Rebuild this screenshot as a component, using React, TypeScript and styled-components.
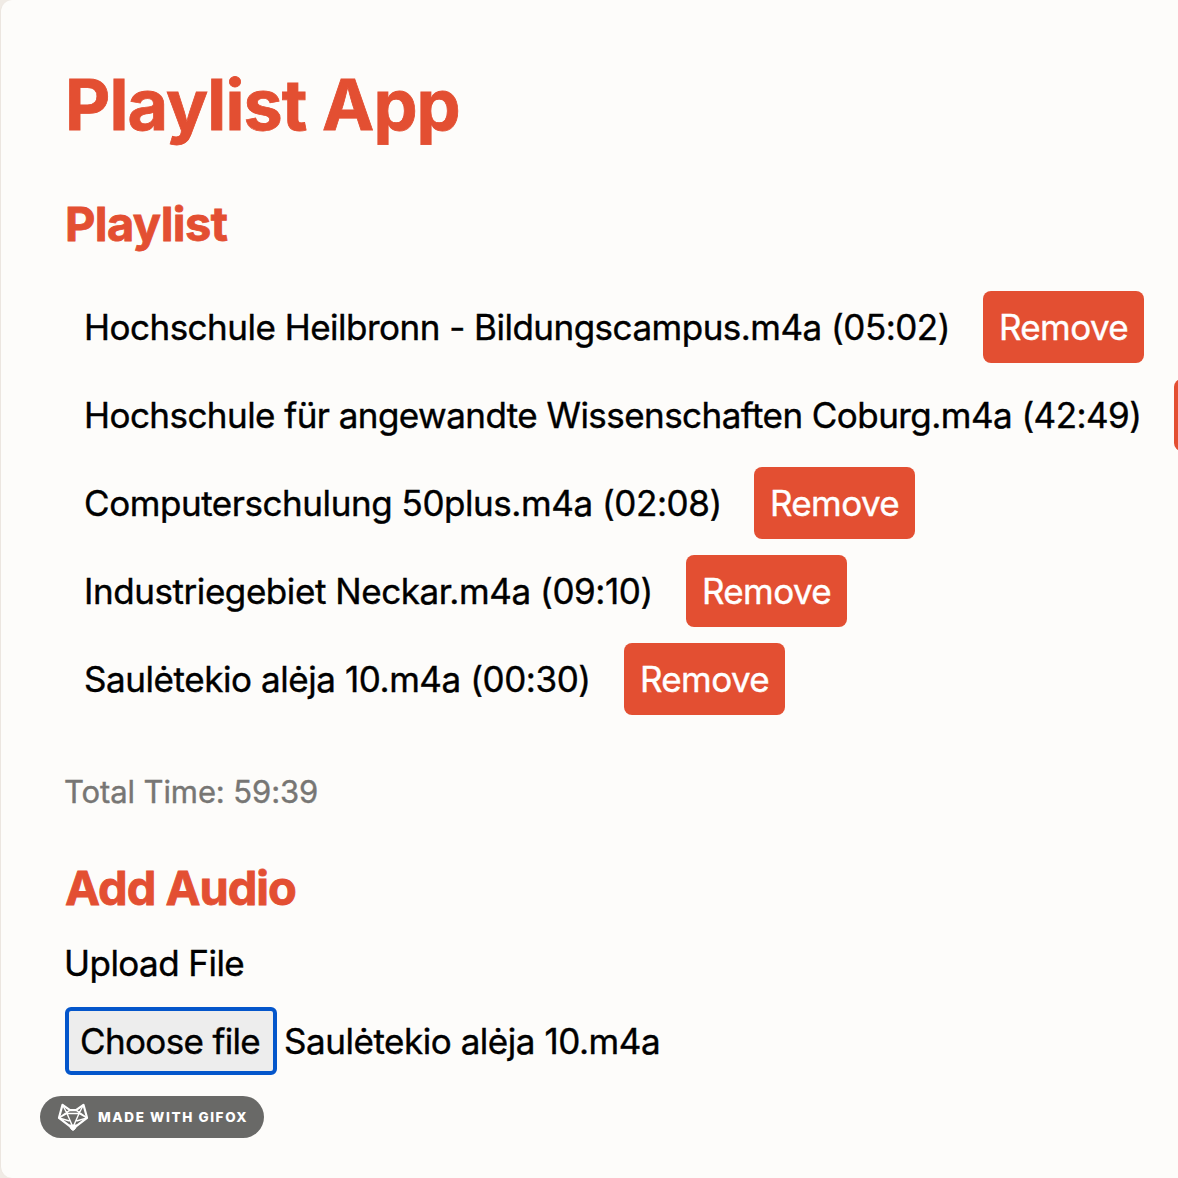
import React from "react";
import styled, { createGlobalStyle } from "styled-components";

const GlobalStyle = createGlobalStyle`
  *, *::before, *::after { box-sizing: border-box; }
  html, body { margin: 0; padding: 0; overflow: hidden; background: #f0ebe5; }
  body { font-family: Inter, "Liberation Sans", sans-serif; }
  button { font: inherit; }
`;

const Window = styled.main`
  width: 1178px;
  height: 1178px;
  padding: 60px 0 0 64px;
  overflow: hidden;
  background: #fdfcfa;
  border-left: 1px solid #ece6e0;
  border-radius: 12px 0 0 12px;
  color: #000;
  font-size: 35px;
  font-weight: 400;
  white-space: nowrap;
  -webkit-text-stroke-width: 0.4px;
`;

const Title = styled.h1`
  margin: 0;
  height: 90px;
  line-height: 90px;
  color: #e34f32;
  font-size: 70px;
  font-weight: 700;
  letter-spacing: -0.93px;
  -webkit-text-stroke-width: 0.8px;
`;

const SectionTitle = styled.h2<{ $tracking: number }>`
  margin: 0;
  height: 60px;
  line-height: 60px;
  color: #e34f32;
  font-size: 47px;
  font-weight: 700;
  letter-spacing: ${(p) => p.$tracking}px;
  -webkit-text-stroke-width: 0.8px;
`;

const PlaylistSection = styled.section`
  margin-top: 44px;
`;

const Tracks = styled.ul`
  display: flex;
  flex-direction: column;
  gap: 16px;
  margin: 37px 0 0;
  padding: 0 0 0 19px;
  list-style: none;
`;

const Track = styled.li`
  display: flex;
  align-items: center;
  height: 72px;
`;

const TrackName = styled.span<{ $width: number; $tracking: number }>`
  flex: none;
  width: ${(p) => p.$width}px;
  line-height: 44px;
  letter-spacing: ${(p) => p.$tracking}px;
`;

const RemoveButton = styled.button`
  flex: none;
  width: 161px;
  height: 72px;
  padding: 0;
  border: 0;
  border-radius: 8px;
  background: #e34f32;
  color: #fff;
  letter-spacing: -0.6px;
  -webkit-text-stroke-width: 0.4px;
`;

const TotalTime = styled.p`
  margin: 55px 0 0 -1px;
  height: 44px;
  line-height: 44px;
  color: #777674;
  font-size: 31px;
  letter-spacing: -0.1px;
`;

const UploadSection = styled.section`
  margin-top: 44px;
`;

const Label = styled.div`
  height: 44px;
  margin: 23px 0 0 -1px;
  line-height: 44px;
  letter-spacing: -0.55px;
`;

const FilePicker = styled.div`
  display: flex;
  align-items: center;
  gap: 7px;
  margin-top: 22px;
  height: 68px;
`;

const ChooseButton = styled.button`
  width: 212px;
  height: 68px;
  padding: 0 0 0 11px;
  border: 4px solid #0456cb;
  border-radius: 6px;
  background: #ededed;
  color: #000;
  text-align: left;
  letter-spacing: -0.65px;
  -webkit-text-stroke-width: 0.4px;
`;

const FileName = styled.span`
  letter-spacing: -0.46px;
`;

const Badge = styled.div`
  position: absolute;
  left: 40px;
  top: 1096px;
  display: flex;
  align-items: center;
  width: 224px;
  height: 42px;
  padding-left: 17px;
  border-radius: 21px;
  background: #696967;
  color: #fff;
  font-size: 13.5px;
  font-weight: 800;
  letter-spacing: 1.6px;
  white-space: nowrap;
`;

const FoxIcon = styled.svg`
  flex: none;
  width: 32px;
  height: 30px;
  margin-right: 9px;
`;

const tracks = [
  { name: "Hochschule Heilbronn - Bildungscampus.m4a (05:02)", width: 899, tracking: -0.51 },
  { name: "Hochschule für angewandte Wissenschaften Coburg.m4a (42:49)", width: 1090, tracking: -0.55 },
  { name: "Computerschulung 50plus.m4a (02:08)", width: 670, tracking: -0.44 },
  { name: "Industriegebiet Neckar.m4a (09:10)", width: 602, tracking: -0.43 },
  { name: "Saulėtekio alėja 10.m4a (00:30)", width: 540, tracking: -0.43 },
];

export default function App() {
  return (
    <>
      <GlobalStyle />
      <Window>
        <Title>Playlist App</Title>
        <PlaylistSection>
          <SectionTitle $tracking={-0.6}>Playlist</SectionTitle>
          <Tracks>
            {tracks.map((t) => (
              <Track key={t.name}>
                <TrackName $width={t.width} $tracking={t.tracking}>{t.name}</TrackName>
                <RemoveButton>Remove</RemoveButton>
              </Track>
            ))}
          </Tracks>
        </PlaylistSection>
        <TotalTime>Total Time: 59:39</TotalTime>
        <UploadSection>
          <SectionTitle $tracking={-1}>Add Audio</SectionTitle>
          <Label>Upload File</Label>
          <FilePicker>
            <ChooseButton>Choose file</ChooseButton>
            <FileName>Saulėtekio alėja 10.m4a</FileName>
          </FilePicker>
        </UploadSection>
      </Window>
      <Badge>
        <FoxIcon viewBox="0 0 32 30" fill="none" stroke="#fff" strokeWidth="2.2" strokeLinejoin="round">
          <path d="M5.5 2.8 L13 8.2 H19 L26.5 2.8 L30 15.8 L16 26.6 L2 15.8 Z" />
          <path d="M5.5 2.8 L10 11.5 L2 15.8 L12.5 19 M26.5 2.8 L22 11.5 L30 15.8 L19.5 19 M13 8.2 L2 15.8 M19 8.2 L30 15.8 M10 11.5 H22 M10 11.5 L15 23 M22 11.5 L17 23" strokeWidth="1.4" />
          <path d="M12 23 H20 L18 27 L16 28.5 L14 27 Z" fill="#fff" strokeWidth="1" />
        </FoxIcon>
        MADE WITH GIFOX
      </Badge>
    </>
  );
}
